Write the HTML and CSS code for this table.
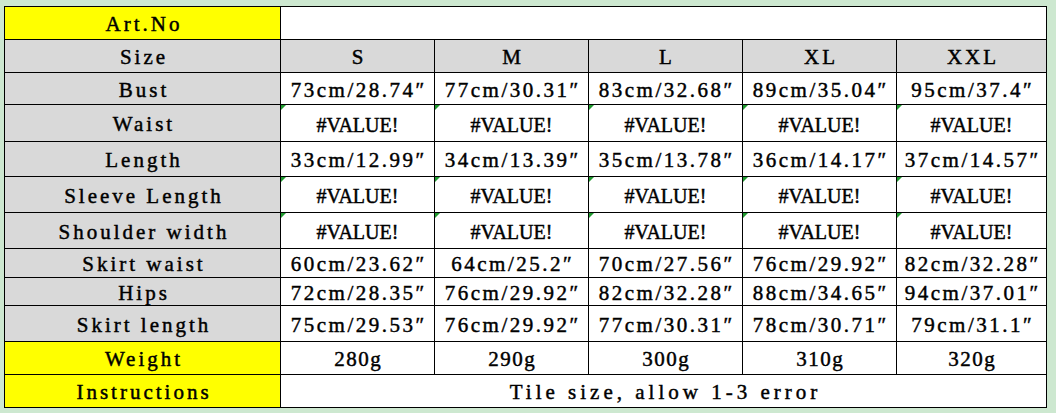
FILE: index.html
```html
<!DOCTYPE html>
<html>
<head>
<meta charset="utf-8">
<link rel="stylesheet" href="styles.css">
</head>
<body>
<div class="sheet">
  <div class="c yellow r1">Art.No</div>
  <div class="c span5 r1"></div>

  <div class="c gray r2">Size</div>
  <div class="c gray r2">S</div>
  <div class="c gray r2">M</div>
  <div class="c gray r2">L</div>
  <div class="c gray r2">XL</div>
  <div class="c gray r2">XXL</div>

  <div class="c gray r3">Bust</div>
  <div class="c num r3">73cm/28.74″</div>
  <div class="c num r3">77cm/30.31″</div>
  <div class="c num r3">83cm/32.68″</div>
  <div class="c num r3">89cm/35.04″</div>
  <div class="c num r3">95cm/37.4″</div>

  <div class="c gray r4">Waist</div>
  <div class="c err r4">#VALUE!</div>
  <div class="c err r4">#VALUE!</div>
  <div class="c err r4">#VALUE!</div>
  <div class="c err r4">#VALUE!</div>
  <div class="c err r4">#VALUE!</div>

  <div class="c gray r5">Length</div>
  <div class="c num r5">33cm/12.99″</div>
  <div class="c num r5">34cm/13.39″</div>
  <div class="c num r5">35cm/13.78″</div>
  <div class="c num r5">36cm/14.17″</div>
  <div class="c num r5">37cm/14.57″</div>

  <div class="c gray r6">Sleeve Length</div>
  <div class="c err r6">#VALUE!</div>
  <div class="c err r6">#VALUE!</div>
  <div class="c err r6">#VALUE!</div>
  <div class="c err r6">#VALUE!</div>
  <div class="c err r6">#VALUE!</div>

  <div class="c gray r7">Shoulder width</div>
  <div class="c err r7">#VALUE!</div>
  <div class="c err r7">#VALUE!</div>
  <div class="c err r7">#VALUE!</div>
  <div class="c err r7">#VALUE!</div>
  <div class="c err r7">#VALUE!</div>

  <div class="c gray r8">Skirt waist</div>
  <div class="c num r8">60cm/23.62″</div>
  <div class="c num r8">64cm/25.2″</div>
  <div class="c num r8">70cm/27.56″</div>
  <div class="c num r8">76cm/29.92″</div>
  <div class="c num r8">82cm/32.28″</div>

  <div class="c gray r9">Hips</div>
  <div class="c num r9">72cm/28.35″</div>
  <div class="c num r9">76cm/29.92″</div>
  <div class="c num r9">82cm/32.28″</div>
  <div class="c num r9">88cm/34.65″</div>
  <div class="c num r9">94cm/37.01″</div>

  <div class="c gray r10">Skirt length</div>
  <div class="c num r10">75cm/29.53″</div>
  <div class="c num r10">76cm/29.92″</div>
  <div class="c num r10">77cm/30.31″</div>
  <div class="c num r10">78cm/30.71″</div>
  <div class="c num r10">79cm/31.1″</div>

  <div class="c yellow r11">Weight</div>
  <div class="c wt r11">280g</div>
  <div class="c wt r11">290g</div>
  <div class="c wt r11">300g</div>
  <div class="c wt r11">310g</div>
  <div class="c wt r11">320g</div>

  <div class="c yellow r12">Instructions</div>
  <div class="c note span5 r12">Tile size, allow 1-3 error</div>
</div>
</body>
</html>
```
FILE: styles.css
```css
html, body {
  margin: 0;
  padding: 0;
}
body {
  background: #cde8d0;
  padding: 6px 0 0 4px;
  width: 1056px;
  height: 413px;
  box-sizing: border-box;
  overflow: hidden;
}
.sheet {
  display: grid;
  grid-template-columns: 275px 153px 153px 153px 153px 149px;
  grid-template-rows: 32px 32px 31px 36px 34px 35px 35px 28px 27px 35px 32px 32px;
  gap: 1px;
  padding: 1px;
  background: #000;
  width: max-content;
  font-family: "Liberation Serif", "DejaVu Serif", serif;
  font-size: 21px;
  color: #000;
  -webkit-text-stroke: 0.45px #000;
}
.c {
  position: relative;
  background: #fff;
  display: flex;
  align-items: center;
  justify-content: center;
  white-space: nowrap;
  line-height: 1;
  letter-spacing: 3px;
  padding-left: 3px;
  padding-top: 3px;
}
.gray { background: #d9d9d9; }
.yellow { background: #ffff00; }
.span5 { grid-column: span 5; }
.num {
  letter-spacing: 2.5px;
  padding-left: 2.5px;
}
.wt {
  letter-spacing: 1.5px;
  padding-left: 1.5px;
}
.note {
  letter-spacing: 4px;
  padding-left: 4px;
}
.err {
  letter-spacing: 0;
  font-size: 20px;
  padding-left: 0;
}
.err::before {
  content: "";
  position: absolute;
  left: 0;
  top: 0;
  width: 0;
  height: 0;
  border-top: 5px solid #1f9a2f;
  border-right: 5px solid transparent;
}
```
